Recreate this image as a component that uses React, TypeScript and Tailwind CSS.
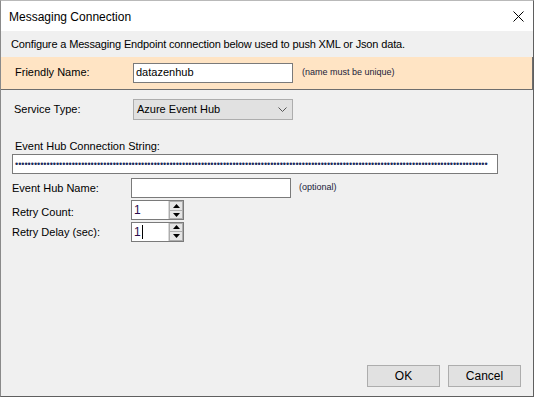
import React from "react";

const font = { fontFamily: '"Liberation Sans", Arial, sans-serif' };

function Spin() {
  return (
    <div className="flex flex-col w-[15px] h-full border-l border-[#d9d9d9] bg-[#f0f0f0]">
      <div className="flex-1 flex items-center justify-center border border-[#adadad] bg-[#e5e5e5]">
        <svg width="7" height="4" viewBox="0 0 7 4"><path d="M0 4 L3.5 0 L7 4 Z" fill="#000" /></svg>
      </div>
      <div className="flex-1 flex items-center justify-center border border-t-0 border-[#adadad] bg-[#e5e5e5]">
        <svg width="7" height="4" viewBox="0 0 7 4"><path d="M0 0 L3.5 4 L7 0 Z" fill="#000" /></svg>
      </div>
    </div>
  );
}

function Numeric({ cursor }: { cursor?: boolean }) {
  return (
    <div className="flex w-[53px] h-[20px] border border-[#7a7a7a] bg-white">
      <div className="flex-1 flex items-center pl-[2px] text-[12px] text-[#2b0b4b] leading-none">
        1{cursor && <span className="inline-block w-px h-[14px] bg-black ml-px" />}
      </div>
      <Spin />
    </div>
  );
}

export default function App() {
  const dots = "•".repeat(150);
  return (
    <div className="w-[535px] h-[397px] bg-white" style={font}>
      <div className="w-[534px] h-[397px] flex flex-col border border-t-[#b9b9b9] border-l-[#8a8a8a] border-r-[#5f5f5f] border-b-[#5f5f5f] text-[11px] text-black">
        {/* title bar */}
        <div className="h-[30px] bg-white flex items-center justify-between pl-[8px] pr-[9px]">
          <span className="text-[12px] pt-[1px]">Messaging Connection</span>
          <svg width="11" height="11" viewBox="0 0 11 11">
            <path d="M0.5 0.5 L10.5 10.5 M10.5 0.5 L0.5 10.5" stroke="#000" strokeWidth="1" />
          </svg>
        </div>
        {/* description */}
        <div className="h-[26px] bg-[#f0f0f0] flex items-center pl-[10px] pt-[1px] tracking-[-0.15px]">
          Configure a Messaging Endpoint connection below used to push XML or Json data.
        </div>
        {/* friendly name panel */}
        <div className="h-[33px] bg-[#ffe4c4] border-b border-r border-[#6e6e6e] flex items-center pb-[1px]">
          <span className="w-[132px] pl-[14px]">Friendly Name:</span>
          <div className="w-[160px] h-[20px] border border-[#7a7a7a] bg-white flex items-center pl-[2px]">datazenhub</div>
          <span className="ml-[9px] text-[9px] text-[#1a1a3a]">(name must be unique)</span>
        </div>
        {/* main */}
        <div className="flex-1 bg-[#f0f0f0] flex flex-col">
          <div className="flex items-center mt-[9px]">
            <span className="w-[132px] pl-[13px]">Service Type:</span>
            <div className="w-[160px] h-[21px] border border-[#adadad] bg-[#e1e1e1] flex items-center justify-between pl-[3px] pr-[5px]">
              <span>Azure Event Hub</span>
              <svg width="9" height="5" viewBox="0 0 9 5"><path d="M0.5 0.5 L4.5 4.5 L8.5 0.5" stroke="#555" fill="none" strokeWidth="1" /></svg>
            </div>
          </div>
          <div className="mt-[19px] pl-[14px] h-[15px] flex items-center">Event Hub Connection String:</div>
          <div className="ml-[11px] w-[486px] h-[20px] border border-[#7a7a7a] bg-white flex items-center pl-[2px] overflow-hidden">
            <span className="text-[9px] text-[#1a2a5a] leading-none whitespace-nowrap">{dots}</span>
          </div>
          <div className="flex items-center mt-[4px]">
            <span className="w-[130px] pl-[11px]">Event Hub Name:</span>
            <div className="w-[160px] h-[20px] border border-[#7a7a7a] bg-white" />
            <span className="ml-[8px] text-[9px] text-[#1a1a3a]">(optional)</span>
          </div>
          <div className="flex items-center mt-[2px]">
            <span className="w-[130px] pl-[11px] pt-[4px]">Retry Count:</span>
            <Numeric />
          </div>
          <div className="flex items-center mt-[1px]">
            <span className="w-[130px] pl-[11px] pt-[2px]">Retry Delay (sec):</span>
            <Numeric cursor />
          </div>
          <div className="flex-1" />
          <div className="flex justify-end gap-[8px] pr-[12px] mb-[9px]">
            <div className="w-[73px] h-[22px] border border-[#adadad] bg-[#e1e1e1] flex items-center justify-center text-[12px]">OK</div>
            <div className="w-[73px] h-[22px] border border-[#adadad] bg-[#e1e1e1] flex items-center justify-center text-[12px]">Cancel</div>
          </div>
        </div>
      </div>
    </div>
  );
}
